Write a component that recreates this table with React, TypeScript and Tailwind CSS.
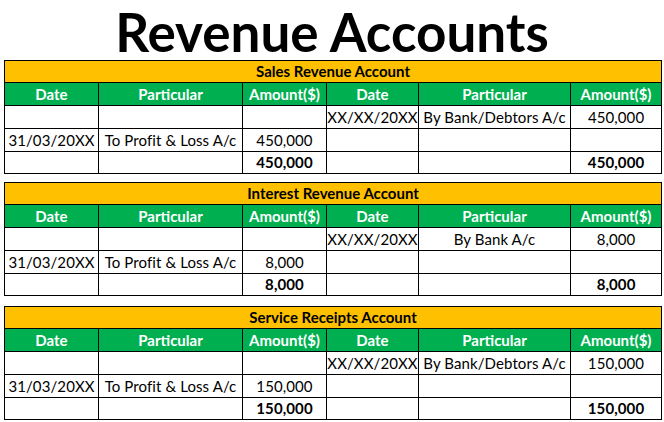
const font = { fontFamily: "Lato, 'Open Sans', sans-serif" };

type Row = [string, string, string, string, string, string];

type Account = {
  title: string;
  rows: Row[];
  total: string;
  gap: string;
};

const accounts: Account[] = [
  {
    title: "Sales Revenue Account",
    rows: [
      ["", "", "", "XX/XX/20XX", "By Bank/Debtors A/c", "450,000"],
      ["31/03/20XX", "To Profit & Loss A/c", "450,000", "", "", ""],
    ],
    total: "450,000",
    gap: "mt-0",
  },
  {
    title: "Interest Revenue Account",
    rows: [
      ["", "", "", "XX/XX/20XX", "By Bank A/c", "8,000"],
      ["31/03/20XX", "To Profit & Loss A/c", "8,000", "", "", ""],
    ],
    total: "8,000",
    gap: "mt-[8px]",
  },
  {
    title: "Service Receipts Account",
    rows: [
      ["", "", "", "XX/XX/20XX", "By Bank/Debtors A/c", "150,000"],
      ["31/03/20XX", "To Profit & Loss A/c", "150,000", "", "", ""],
    ],
    total: "150,000",
    gap: "mt-[10px]",
  },
];

const heads = ["Date", "Particular", "Amount($)", "Date", "Particular", "Amount($)"];

function AccountTable({ acc }: { acc: Account }) {
  const cell = "border border-black text-center whitespace-nowrap px-0 text-[15px] leading-none text-black tracking-[0.1px]";
  return (
    <table className={"table-fixed border-collapse w-[657px] " + acc.gap} style={font}>
      <colgroup>
        <col className="w-[94px]" />
        <col className="w-[144px]" />
        <col className="w-[84px]" />
        <col className="w-[92px]" />
        <col className="w-[152px]" />
        <col className="w-[91px]" />
      </colgroup>
      <tbody>
        <tr className="h-[22px]">
          <td colSpan={6} className="border border-black bg-[#ffc000] text-center font-bold text-[15px] leading-none text-black">
            {acc.title}
          </td>
        </tr>
        <tr className="h-[23px]">
          {heads.map((h, i) => (
            <td key={i} className="border border-black bg-[#00b050] text-center font-bold text-[15px] leading-none text-white">
              {h}
            </td>
          ))}
        </tr>
        {acc.rows.map((r, i) => (
          <tr key={i} className="h-[23px]">
            {r.map((c, j) => (
              <td key={j} className={cell}>
                {c}
              </td>
            ))}
          </tr>
        ))}
        <tr className="h-[22px]">
          <td className={cell}></td>
          <td className={cell}></td>
          <td className={cell + " font-bold"}>{acc.total}</td>
          <td className={cell}></td>
          <td className={cell}></td>
          <td className={cell + " font-bold"}>{acc.total}</td>
        </tr>
      </tbody>
    </table>
  );
}

export default function App() {
  return (
    <div className="w-[664px] h-[422px] bg-white overflow-hidden">
      <h1
        className="h-[60px] flex items-center justify-center pt-[2px] text-[53px] font-bold leading-none text-black"
        style={font}
      >
        Revenue Accounts
      </h1>
      <div className="flex flex-col pl-[4px]">
        {accounts.map((a) => (
          <AccountTable key={a.title} acc={a} />
        ))}
      </div>
    </div>
  );
}
